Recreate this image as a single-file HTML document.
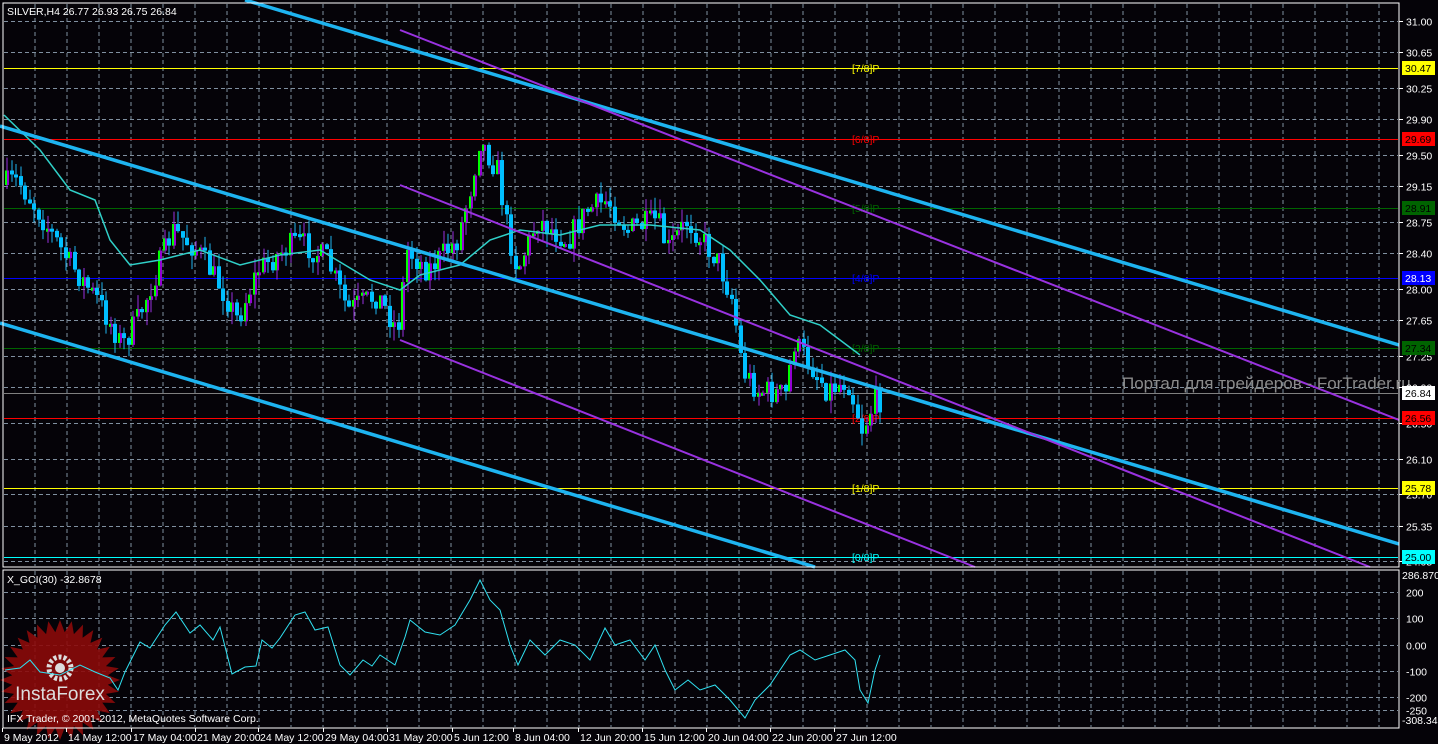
<!DOCTYPE html>
<html><head><meta charset="utf-8"><style>
html,body{margin:0;padding:0;background:#000;width:1438px;height:744px;overflow:hidden}
svg{display:block}
text{font-family:"Liberation Sans",sans-serif;font-size:10.5px}
</style></head><body>
<svg id="s" width="1438" height="744" xmlns="http://www.w3.org/2000/svg">
<rect width="1438" height="744" fill="#050308"/>
<g id="grid" stroke="#8090a0" stroke-dasharray="4,3" stroke-width="1"></g>
<g transform="translate(60,680)">
<polygon id="star" fill="#8b0a0a" opacity="0.9"/>
<circle cx="0" cy="-12" r="11" fill="none" stroke="#ddd" stroke-width="5" stroke-dasharray="3,2"/>
<circle cx="0" cy="-12" r="5" fill="#ddd"/>
<text x="0" y="20" text-anchor="middle" fill="#ddd" style="font-size:19px">InstaForex</text>
</g>
<g id="hl"></g>
<g id="candles"></g>
<polyline id="ma" fill="none" stroke="#30d0c8" stroke-width="1.5"/>
<g stroke="#1eb4f0" stroke-width="3.5">
<line x1="245" y1="0" x2="1399" y2="345"/>
<line x1="0" y1="126" x2="1399" y2="544"/>
<line x1="0" y1="323" x2="815" y2="567"/>
</g>
<g stroke="#9932e0" stroke-width="2">
<line x1="400" y1="30" x2="1399" y2="420"/>
<line x1="400" y1="185" x2="1370" y2="567"/>
<line x1="400" y1="340" x2="975" y2="567"/>
</g>
<polyline id="cci" fill="none" stroke="#30e0f0" stroke-width="1"/>
<rect x="3" y="3" width="1396" height="564" fill="none" stroke="#fff" stroke-width="1"/>
<rect x="3" y="570" width="1396" height="158" fill="none" stroke="#fff" stroke-width="1"/>
<text x="7" y="15" fill="#fff">SILVER,H4  26.77 26.93 26.75 26.84</text>
<text x="7" y="583" fill="#fff">X_GCI(30) -32.8678</text>
<text x="7" y="722" fill="#fff">IFX Trader, © 2001-2012, MetaQuotes Software Corp.</text>
<text x="1122" y="389" fill="#8a8a8a" style="font-size:17px">Портал для трейдеров - ForTrader.ru</text>
<g id="lab"></g>
</svg>
<script>
var NS="http://www.w3.org/2000/svg";
function el(p,t,a,txt){var e=document.createElementNS(NS,t);for(var k in a)e.setAttribute(k,a[k]);if(txt!=null)e.textContent=txt;p.appendChild(e);return e}
var G=document.getElementById('grid'),L=document.getElementById('lab'),H=document.getElementById('hl');
for(var x=35;x<1399;x+=32){el(G,'line',{x1:x,y1:4,x2:x,y2:566});el(G,'line',{x1:x,y1:571,x2:x,y2:727});}
function py(p){return 21+(31-p)*89.3}
[31,30.65,30.25,29.9,29.5,29.15,28.75,28.4,28,27.65,27.25,26.9,26.5,26.1,25.7,25.35,24.95].forEach(function(p){var y=Math.round(py(p))+.5;el(G,'line',{x1:4,y1:y,x2:1398,y2:y});el(L,'line',{x1:1399,y1:y,x2:1403,y2:y,stroke:'#fff'});el(L,'text',{x:1406,y:y+4,fill:'#fff'},p.toFixed(2));});
[[200,592],[100,618],[0,645],[-100,671],[-200,697],[-250,710]].forEach(function(a){var y=a[1]+.5;el(G,'line',{x1:4,y1:y,x2:1398,y2:y});el(L,'text',{x:1406,y:y+4,fill:'#fff'},a[0]==0?'0.00':a[0]);});
el(L,'text',{x:1402,y:579,fill:'#fff'},'286.870');el(L,'text',{x:1402,y:724,fill:'#fff'},'-308.345');
var hl=[[30.47,68,'#ffff00','#000','[7/8]P','#ffff00'],[29.69,139,'#ff0000','#000','[6/8]P','#ff0000'],[28.91,208,'#006400','#000','[5/8]P','#006400'],[28.13,278,'#0000ff','#fff','[4/8]P','#0000ff'],[27.34,348,'#006400','#000','[3/8]P','#006400'],[26.84,393,'#808080','#000','',''],[26.56,418,'#ff0000','#000','[2/8]P','#ff0000'],[25.78,488,'#ffff00','#000','[1/8]P','#ffff00'],[25.00,557,'#00ffff','#000','[0/8]P','#00ffff']];
hl.forEach(function(h){var y=h[1]+.5;el(H,'line',{x1:4,y1:y,x2:1398,y2:y,stroke:h[2]});var bg=h[0]==26.84?'#fff':h[2];el(L,'rect',{x:1402,y:h[1]-7,width:33,height:14,fill:bg});el(L,'text',{x:1405,y:h[1]+4,fill:h[3]},h[0].toFixed(2));if(h[4])el(H,'text',{x:852,y:h[1]+4,fill:h[5]},h[4]);});
var tl=['9 May 2012','14 May 12:00','17 May 04:00','21 May 20:00','24 May 12:00','29 May 04:00','31 May 20:00','5 Jun 12:00','8 Jun 04:00','12 Jun 20:00','15 Jun 12:00','20 Jun 04:00','22 Jun 20:00','27 Jun 12:00'];
var tx=[2,66,131,195,258,323,387,452,513,578,642,706,770,834];
tl.forEach(function(t,i){el(L,'line',{x1:tx[i]+.5,y1:728,x2:tx[i]+.5,y2:732,stroke:'#fff'});el(L,'text',{x:tx[i]+2,y:741,fill:'#fff'},t);});
var pts=[];for(var i=0;i<64;i++){var r=i%2?48:60,a=i*Math.PI/32;pts.push((r*Math.cos(a)).toFixed(1)+','+(r*Math.sin(a)).toFixed(1));}document.getElementById('star').setAttribute('points',pts.join(' '));
function interp(arr,x){for(var i=1;i<arr.length;i++)if(x<=arr[i][0]){var a=arr[i-1],b=arr[i],t=(x-a[0])/(b[0]-a[0]);return a[1]+(b[1]-a[1])*t}return arr[arr.length-1][1]}
var path=[[5,185],[20,180],[40,210],[70,260],[100,300],[125,345],[140,320],[160,270],[175,230],[200,250],[225,290],[240,320],[260,270],[300,240],[330,260],[350,310],[380,295],[400,330],[410,250],[430,270],[460,240],[475,180],[482,140],[500,170],[510,230],[520,270],[540,220],[570,240],[590,210],[610,200],[630,230],[660,220],[670,250],[690,220],[720,260],[735,300],[745,370],[760,390],[790,395],[795,340],[810,360],[830,390],[850,380],[865,430],[878,400]];
var seed=7;function rnd(){seed=(seed*16807)%2147483647;return seed/2147483647}
var C=document.getElementById('candles'),prev=interp(path,5);
for(var x=5;x<=878;x+=4.5){var c=interp(path,x+4.5)+(rnd()-.5)*26,o=prev;var hi=Math.min(o,c)-rnd()*14,lo=Math.max(o,c)+rnd()*14;var xx=Math.round(x);
el(C,'line',{x1:xx+2,y1:hi,x2:xx+2,y2:lo,stroke:c<o?'#9932e0':'#1eb4f0'});
var bt=Math.min(o,c),bh=Math.max(3,Math.abs(c-o));
el(C,'rect',{x:xx,y:bt,width:4,height:bh,fill:c<o?'#9400d3':'#00bfff'});
if(c<o)el(C,'rect',{x:xx,y:bt,width:2,height:bh,fill:'#00ff00'});prev=c;}
var ma=[[4,115],[40,150],[70,190],[95,200],[110,240],[130,265],[160,260],[200,250],[240,265],[280,255],[320,250],[370,280],[400,290],[420,275],[460,265],[490,240],[520,230],[560,235],[600,225],[650,225],[700,230],[730,250],[760,280],[790,315],[820,325],[840,340],[860,355]];
document.getElementById('ma').setAttribute('points',ma.map(function(p){return p.join(',')}).join(' '));
var cc=[[5,670],[20,668],[30,660],[40,672],[60,675],[80,665],[95,672],[110,678],[118,690],[125,672],[140,642],[150,648],[165,625],[176,612],[190,633],[200,625],[213,640],[220,627],[232,674],[245,667],[256,666],[262,640],[272,648],[280,638],[295,615],[305,612],[315,630],[328,627],[340,665],[350,675],[363,660],[372,666],[380,655],[395,665],[405,637],[410,620],[425,632],[440,635],[455,625],[470,600],[480,580],[490,600],[500,610],[510,645],[518,665],[530,640],[545,655],[560,640],[575,645],[590,660],[605,628],[615,645],[630,640],[645,660],[655,645],[665,670],[675,690],[688,680],[700,690],[715,685],[730,700],[745,718],[755,700],[770,685],[790,655],[800,650],[815,660],[830,655],[845,650],[855,660],[860,690],[868,703],[875,670],[880,655]];
document.getElementById('cci').setAttribute('points',cc.map(function(p){return p.join(',')}).join(' '));
</script>
</body></html>
